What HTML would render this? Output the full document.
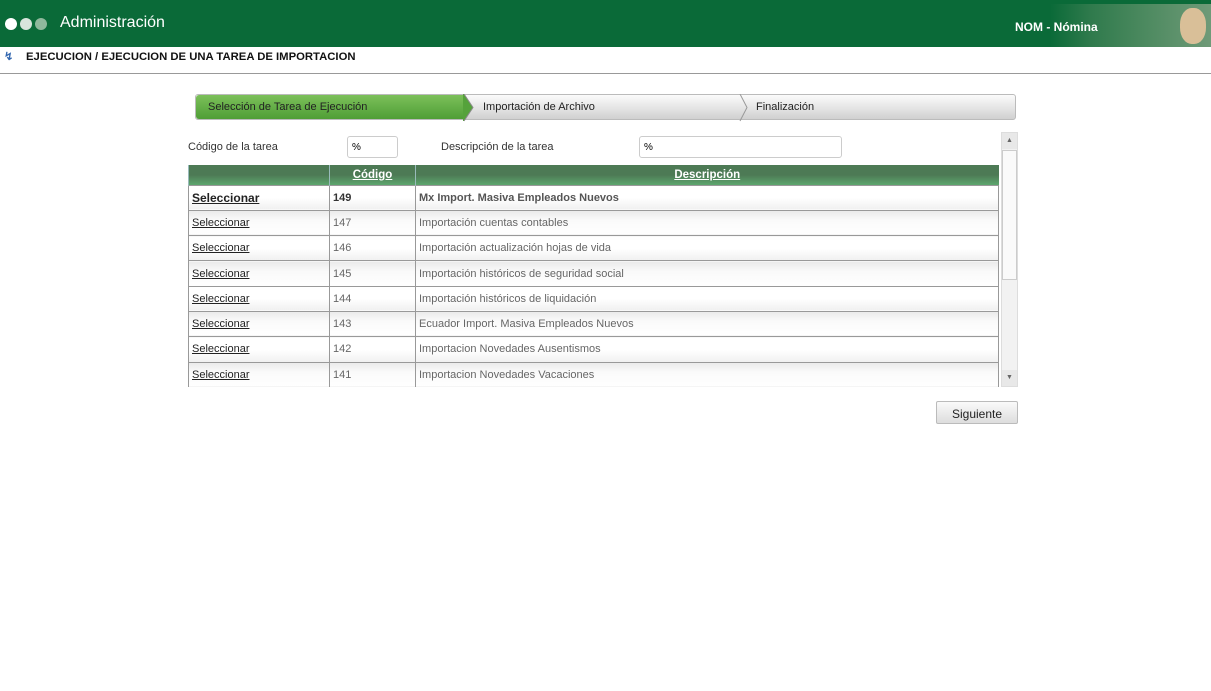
<!DOCTYPE html>
<html><head><meta charset="utf-8"><style>
*{margin:0;padding:0;box-sizing:border-box}
body{width:1211px;height:691px;background:#fff;font-family:"Liberation Sans",Arial,sans-serif;font-size:11px;position:relative;overflow:hidden}
.hdr{position:absolute;left:0;top:0;width:1211px;height:47px;background:#0a6a38}
.dot{position:absolute;top:18px;width:12px;height:12px;border-radius:50%}
.ttl{position:absolute;left:60px;top:14px;color:#fff;font-family:"Liberation Sans",sans-serif;font-size:16px}
.photo{position:absolute;left:1050px;top:4px;width:161px;height:43px;background:linear-gradient(90deg,#0a6a38,#2f7a4c 25%,#4d8a60 60%,#6f9a78)}
.nom{position:absolute;left:1015px;top:20px;color:#fff;font-family:"Liberation Sans",sans-serif;font-weight:bold;font-size:12px}
.bc{position:absolute;left:26px;top:51px;font-weight:bold;font-size:11.3px;color:#111}
.line{position:absolute;left:0;top:73px;width:1211px;height:1px;background:#999}
.wiz{position:absolute;left:195px;top:94px;width:821px;height:26px;border:1px solid #bbb;border-radius:3px;background:linear-gradient(#fbfbfb,#e2e2e2 60%,#d0d0d0)}
.wiz span{position:absolute;top:6px;color:#222}
.g{position:absolute;left:0;top:0;width:268px;height:24px;background:linear-gradient(#7cc05a,#4f9e36);border-radius:3px 0 0 3px}
.lbl{position:absolute;top:141px;color:#333}
.inp{position:absolute;top:136px;height:22px;border:1px solid #ccc;border-radius:3px;padding:5px 4px;font-size:10px}
th{height:20px;background:linear-gradient(#4d7a55,#4d7a55 50%,#5da66e);color:#fff;text-decoration:underline;font-weight:bold;border-left:1px solid #9bb;font-size:11.5px}
td{height:25.3px;border:1px solid #999;padding:0 3px;color:#666;vertical-align:middle;background:linear-gradient(#fff,#fff 50%,#f0f0f0)}
tr:nth-child(odd) td{background:linear-gradient(#eaeaea,#fafafa 40%,#fff)}
td:first-child{color:#222;text-decoration:underline}
.wrap{position:absolute;left:188px;top:165px;width:812px;height:222px;overflow:hidden}
table{border-collapse:collapse;width:811px}
.sb{position:absolute;left:1001px;top:132px;width:17px;height:255px;background:#f2f2f2;border:1px solid #ddd}
.btn{position:absolute;left:936px;top:401px;width:82px;height:23px;border:1px solid #bbb;border-radius:2px;background:linear-gradient(#fafafa,#ddd);text-align:center;padding-top:5px;font-size:12px;color:#222}
</style></head><body>
<div class="hdr">
<div class="dot" style="left:5px;background:#fff"></div>
<div class="dot" style="left:20px;background:#d8e4dc"></div>
<div class="dot" style="left:35px;background:#8fb89c"></div>
<div class="ttl">Administración</div>
<div class="photo"></div>
<div style="position:absolute;left:1180px;top:8px;width:26px;height:36px;border-radius:45%;background:#d9bf98"></div>
<div class="nom">NOM - Nómina</div>
</div>
<div style="position:absolute;left:4px;top:50px;color:#3468b0;font-weight:bold;font-size:11px">&#8623;</div>
<div class="bc">EJECUCION / EJECUCION DE UNA TAREA DE IMPORTACION</div>
<div class="line"></div>
<div class="wiz"><div class="g"></div>
<svg style="position:absolute;left:267px;top:-1px" width="16" height="28"><path d="M0 0 L1 0 L10 13.5 L1 27 L0 27Z" fill="#55a23b"/><path d="M1 0 L10 13.5 L1 27" stroke="#8a8a8a" fill="none"/></svg>
<svg style="position:absolute;left:540px;top:-1px" width="16" height="28"><path d="M4 0 L11 13.5 L4 27" stroke="#999" fill="none"/></svg>
<span style="left:12px">Selección de Tarea de Ejecución</span>
<span style="left:287px">Importación de Archivo</span>
<span style="left:560px">Finalización</span>
</div>
<div class="lbl" style="left:188px">Código de la tarea</div>
<div class="inp" style="left:347px;width:51px">%</div>
<div class="lbl" style="left:441px">Descripción de la tarea</div>
<div class="inp" style="left:639px;width:203px">%</div>
<div class="wrap"><table>
<tr><th style="width:141px"></th><th style="width:86px">Código</th><th>Descripción</th></tr>
<tr><td style="font-weight:bold;font-size:12px">Seleccionar</td><td style="font-weight:bold;color:#333">149</td><td style="font-weight:bold;color:#555">Mx Import. Masiva Empleados Nuevos</td></tr>
<tr><td>Seleccionar</td><td>147</td><td>Importación cuentas contables</td></tr>
<tr><td>Seleccionar</td><td>146</td><td>Importación actualización hojas de vida</td></tr>
<tr><td>Seleccionar</td><td>145</td><td>Importación históricos de seguridad social</td></tr>
<tr><td>Seleccionar</td><td>144</td><td>Importación históricos de liquidación</td></tr>
<tr><td>Seleccionar</td><td>143</td><td>Ecuador Import. Masiva Empleados Nuevos</td></tr>
<tr><td>Seleccionar</td><td>142</td><td>Importacion Novedades Ausentismos</td></tr>
<tr><td>Seleccionar</td><td>141</td><td>Importacion Novedades Vacaciones</td></tr>
</table></div>
<div class="sb">
<div style="position:absolute;left:0;top:0;width:15px;height:16px;background:#e8e8e8;color:#666;font-size:7px;text-align:center;line-height:16px">▲</div>
<div style="position:absolute;left:0;top:17px;width:15px;height:130px;background:#fafafa;border:1px solid #ccc"></div>
<div style="position:absolute;left:0;bottom:0;width:15px;height:16px;background:#e8e8e8;color:#666;font-size:7px;text-align:center;line-height:16px">▼</div>
</div>
<div class="btn">Siguiente</div>
</body></html>
